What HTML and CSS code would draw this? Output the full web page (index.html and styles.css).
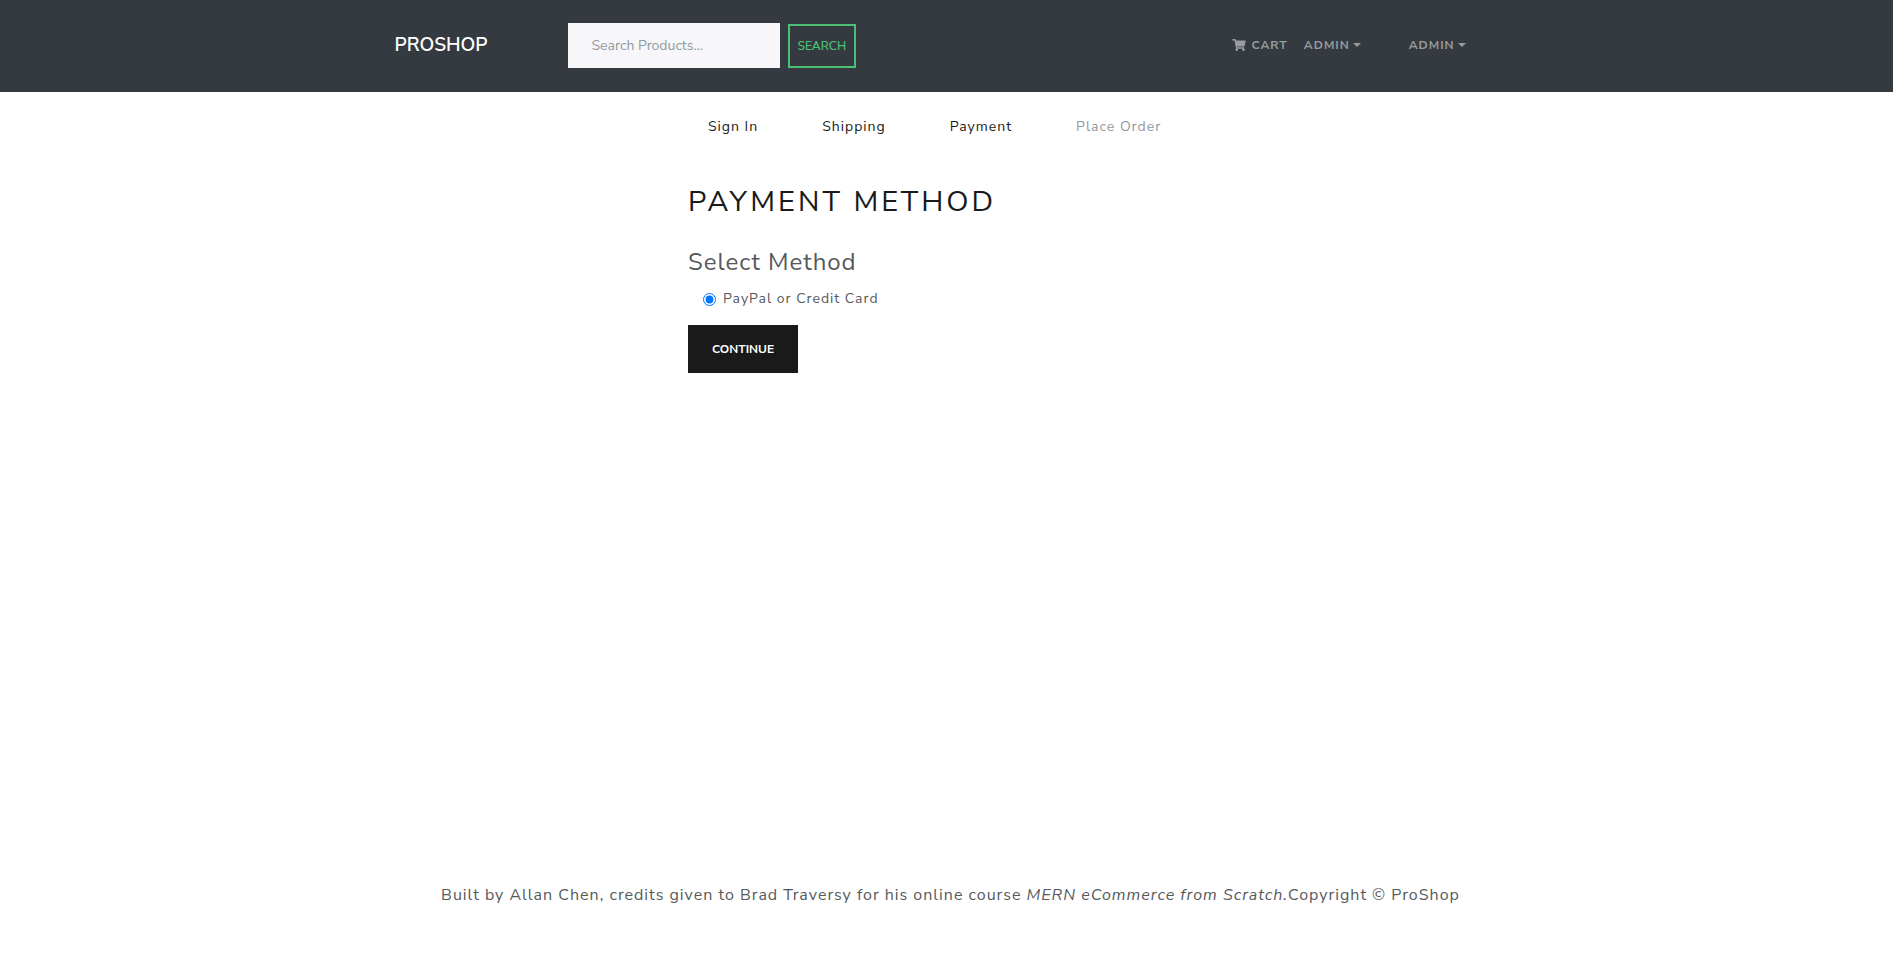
FILE: index.html
```
<!DOCTYPE html>
<html lang="en">
<head>
<meta charset="utf-8">
<meta name="viewport" content="width=device-width, initial-scale=1">
<title>ProShop</title>
<link rel="stylesheet" href="styles.css">
</head>
<body>
<header class="navbar">
  <div class="container navbar-inner">
    <a class="brand" href="#">ProShop</a>
    <form class="search">
      <input class="search-input" type="text" placeholder="Search Products..." aria-label="Search Products">
      <button class="btn btn-outline" type="button">Search</button>
    </form>
    <nav class="menu" aria-label="Main">
      <a class="menu-link" href="#"><svg class="cart" viewBox="0 0 576 512" aria-hidden="true"><path fill="currentColor" d="M528.12 301.319l47.273-208C578.806 78.301 567.391 64 551.99 64H159.208l-9.166-44.81C147.758 8.021 137.93 0 126.529 0H24C10.745 0 0 10.745 0 24v16c0 13.255 10.745 24 24 24h69.883l70.248 343.435C147.325 417.1 136 435.222 136 456c0 30.928 25.072 56 56 56s56-25.072 56-56c0-15.674-6.447-29.835-16.824-40h209.647C430.447 426.165 424 440.326 424 456c0 30.928 25.072 56 56 56s56-25.072 56-56c0-22.172-12.888-41.332-31.579-50.405l5.517-24.276c3.413-15.018-8.002-29.319-23.403-29.319H218.117l-6.545-32h293.145c11.206 0 20.92-7.754 23.403-18.681z"/></svg>Cart</a>
      <button class="menu-link dropdown" type="button">Admin</button>
      <button class="menu-link dropdown dropdown-last" type="button">Admin</button>
    </nav>
  </div>
</header>
<main class="content">
  <nav class="steps" aria-label="Checkout steps">
    <a class="step" href="#">Sign In</a>
    <a class="step" href="#">Shipping</a>
    <a class="step" href="#">Payment</a>
    <a class="step disabled" aria-disabled="true">Place Order</a>
  </nav>
  <h1 class="title">Payment Method</h1>
  <form>
    <fieldset class="methods">
      <legend class="legend">Select Method</legend>
      <div class="check">
        <input class="radio" type="radio" id="paypal" name="method" checked>
        <label for="paypal">PayPal or Credit Card</label>
      </div>
    </fieldset>
    <button class="btn btn-primary" type="button">Continue</button>
  </form>
</main>
<footer class="footer">
  <p class="credits">Built by Allan Chen, credits given to Brad Traversy for his online course <em>MERN eCommerce from Scratch.</em>Copyright © ProShop</p>
</footer>
</body>
</html>
```
FILE: styles.css
```
* {
  box-sizing: border-box;
}

body {
  margin: 0;
  min-height: 100vh;
  display: flex;
  flex-direction: column;
  background: #fff;
  color: #55595c;
  font: 400 14px/20px "Nunito Sans", Lato, "Open Sans", sans-serif;
  letter-spacing: 1px;
}

a {
  color: inherit;
  text-decoration: none;
}

button,
input {
  font: inherit;
}

.container {
  width: 100%;
  max-width: 1140px;
  margin: 0 auto;
  padding: 0 16px;
}

.navbar {
  background: #343a40;
}

.navbar-inner {
  display: flex;
  align-items: center;
  min-height: 92px;
  padding-bottom: 2px;
}

.brand {
  width: 175px;
  padding-left: 2px;
  color: #fff;
  font-size: 19px;
  font-weight: 600;
  line-height: 28px;
  letter-spacing: 0;
  text-transform: uppercase;
}

.search {
  display: flex;
  align-items: flex-end;
  gap: 8px;
}

.search-input {
  width: 212px;
  height: 45px;
  padding: 0 24px;
  border: 0;
  border-radius: 0;
  background: #f7f7f9;
  color: #55595c;
}

.search-input::placeholder {
  color: #919aa1;
  opacity: 1;
}

.btn {
  border: 0;
  font-size: 12px;
  font-weight: 600;
  letter-spacing: 0;
  text-transform: uppercase;
  cursor: pointer;
}

.btn-outline {
  height: 44px;
  padding: 0 8px;
  border: 2px solid #4bbf73;
  background: transparent;
  color: #4bbf73;
}

.btn-primary {
  height: 48px;
  padding: 0 24px;
  background: #1a1a1a;
  color: #fff;
  font-weight: 700;
}

.menu {
  display: flex;
  align-items: center;
  margin-left: auto;
  padding-right: 27px;
}

.menu-link {
  display: flex;
  align-items: center;
  padding: 8px;
  border: 0;
  background: transparent;
  color: #999c9f;
  font-size: 12px;
  font-weight: 700;
  letter-spacing: 1px;
  text-transform: uppercase;
}

.cart {
  width: 14px;
  height: 12px;
  margin-right: 5px;
}

.dropdown::after {
  content: "";
  margin-left: 3px;
  border-top: 4px solid;
  border-right: 4px solid transparent;
  border-left: 4px solid transparent;
}

.dropdown-last {
  margin-left: 32px;
}

.content {
  width: 100%;
  max-width: 549px;
  margin: 0 auto;
  padding: 16px;
  flex: 1;
}

.steps {
  display: flex;
  gap: 64px;
  margin-bottom: 32px;
  padding: 9px 20px;
  color: #1a1a1a;
  white-space: nowrap;
}

.disabled {
  color: #919aa1;
}

.title {
  margin: 0 0 18px;
  color: #1a1a1a;
  font-size: 29px;
  font-weight: 400;
  line-height: 48px;
  letter-spacing: 3px;
  text-transform: uppercase;
}

.methods {
  margin: 0 0 16px;
  padding: 0;
  border: 0;
}

.legend {
  padding: 0;
  margin-bottom: 9px;
  font-size: 24px;
  line-height: 36px;
}

.check {
  display: flex;
  align-items: center;
  gap: 7px;
  padding-left: 15px;
}

.radio {
  width: 13px;
  height: 13px;
  margin: 0;
  accent-color: #0075ff;
}

.footer {
  padding: 48px 12px 56px 20px;
  text-align: center;
}

.credits {
  margin: 0;
  font-size: 16px;
  line-height: 24px;
}
```
